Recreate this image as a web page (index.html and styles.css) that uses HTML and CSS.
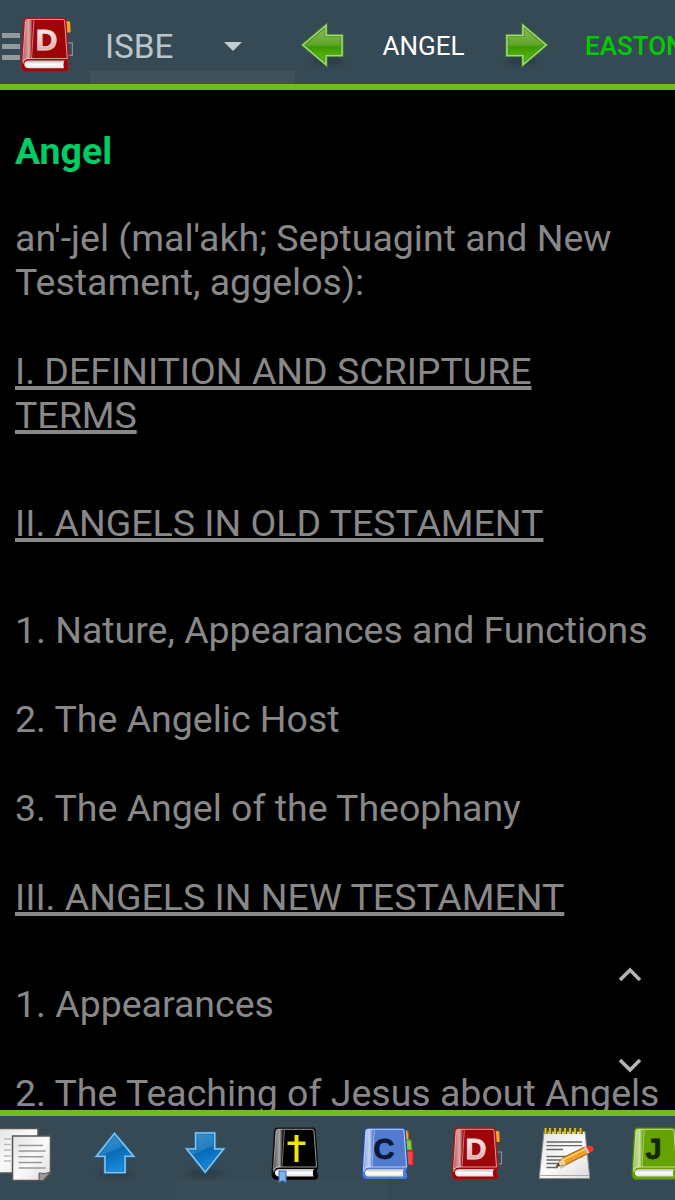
FILE: index.html
```html
<!DOCTYPE html>
<html lang="en">
<head>
    <meta charset="UTF-8">
    <title>ISBE - Angel</title>
    <link rel="stylesheet" href="styles.css">
</head>
<body>
<!-- shared gradients and the book shape -->
<svg class="defs" width="0" height="0">
    <defs>
        <linearGradient id="green" x1="0" y1="0" x2="0" y2="1">
            <stop offset="0" stop-color="#8fbd65"/>
            <stop offset=".48" stop-color="#62a52b"/>
            <stop offset=".56" stop-color="#3d9a00"/>
            <stop offset="1" stop-color="#63c914"/>
        </linearGradient>
        <linearGradient id="blue" x1="0" y1="0" x2=".4" y2="1">
            <stop offset="0" stop-color="#4291c8"/>
            <stop offset=".5" stop-color="#2380c4"/>
            <stop offset=".56" stop-color="#0869b4"/>
            <stop offset="1" stop-color="#168be0"/>
        </linearGradient>
        <linearGradient id="paper" x1="0" y1="0" x2="1" y2="1">
            <stop offset="0" stop-color="#e2e2e2"/>
            <stop offset=".5" stop-color="#fafafa"/>
            <stop offset="1" stop-color="#dcdcdc"/>
        </linearGradient>
        <linearGradient id="spine">
            <stop offset="0" stop-color="#fff" stop-opacity=".35"/>
            <stop offset=".6" stop-color="#fff" stop-opacity=".65"/>
            <stop offset="1" stop-color="#fff" stop-opacity=".1"/>
        </linearGradient>
        <linearGradient id="pages" x1="0" y1="0" x2="0" y2="1">
            <stop offset="0" stop-color="#b9b9b9"/>
            <stop offset=".5" stop-color="#fff"/>
            <stop offset="1" stop-color="#ddd"/>
        </linearGradient>
        <linearGradient id="letterD" x1="0" y1="0" x2="0" y2="1">
            <stop offset="0" stop-color="#fff"/>
            <stop offset="1" stop-color="#d99a9a"/>
        </linearGradient>
        <symbol id="book" viewBox="0 0 60 60">
            <path class="cover" d="M12 4H48Q50 4 50.200 6L53 43L51.500 47Q52 50 53 52Q53 55.500 49 55.500H11Q7 55 7 49L9.500 7Q10 4 12 4Z" stroke-width="1"/>
            <path d="M13 5.500H18L16 43Q11 43 9 46L11 7Z" fill="url(#spine)"/>
            <path d="M19.300 6L17 43" stroke="#fff" stroke-opacity=".45" fill="none"/>
            <path d="M8.500 46L11 7Q11.200 5.300 13 5.300H47Q48.800 5.300 49 7L51.500 43H14Q9 43 8.700 48" fill="none" stroke="#fff" stroke-opacity=".6"/>
            <path d="M13.500 45H49Q47 48.500 48.500 52.500H13.500Q10 52 10 48.700T13.500 45Z" fill="url(#pages)"/>
        </symbol>
        <symbol id="tabsD" viewBox="0 0 60 60">
            <rect x="49.500" y="7" width="5" height="11" rx="1" fill="#f6a51b" transform="rotate(-4 52 12)"/>
            <path d="M51 28H56.500V40H52" fill="none" stroke="#83909a" stroke-width="1.200"/>
        </symbol>
    </defs>
</svg>

<div class="app">
    <div class="topbar">
        <div class="home">
            <div class="menu"><i></i><i></i><i></i></div>
            <svg class="icon red home-book" viewBox="0 0 60 60">
                <use href="#tabsD"/>
                <use href="#book"/>
                <text x="31.500" y="34.500" fill="url(#letterD)" stroke="#f0d5d5">D</text>
            </svg>
        </div>
        <div class="spinner">
            <span>ISBE</span>
            <i class="caret"></i>
        </div>
        <svg class="arrow prev" viewBox="0 0 50 50">
            <ellipse cx="29" cy="41" rx="16" ry="5" class="shadow"/>
            <path d="M5 25L28 5.500V15.500H44V35.500H28V44.500Z" fill="url(#green)" stroke="#3f8f1b" stroke-width="3"/>
            <path d="M5 25L28 5.500V15.500H44V35.500H28V44.500Z" fill="none" stroke="#a5d57d" stroke-width="1.600"/>
        </svg>
        <span class="topic">ANGEL</span>
        <svg class="arrow next" viewBox="0 0 50 50">
            <ellipse cx="21" cy="41" rx="16" ry="5" class="shadow"/>
            <path d="M45 25L22 5.500V15.500H6V35.500H22V44.500Z" fill="url(#green)" stroke="#3f8f1b" stroke-width="3"/>
            <path d="M45 25L22 5.500V15.500H6V35.500H22V44.500Z" fill="none" stroke="#a5d57d" stroke-width="1.600"/>
        </svg>
        <span class="other">EASTON</span>
    </div>

    <div class="content">
        <h1>Angel</h1>
        <p>an'-jel (mal'akh; Septuagint and New Testament, aggelos):</p>
        <h2>I. DEFINITION AND SCRIPTURE TERMS</h2>
        <h2>II. ANGELS IN OLD TESTAMENT</h2>
        <p>1. Nature, Appearances and Functions</p>
        <p>2. The Angelic Host</p>
        <p>3. The Angel of the Theophany</p>
        <h2>III. ANGELS IN NEW TESTAMENT</h2>
        <p>1. Appearances</p>
        <p>2. The Teaching of Jesus about Angels</p>
        <div class="scroll">
            <svg width="24" height="16" viewBox="0 0 24 16"><path d="M2 13L12 3L22 13"/></svg>
            <svg width="24" height="16" viewBox="0 0 24 16"><path d="M2 3L12 13L22 3"/></svg>
        </div>
    </div>

    <div class="bottombar">
        <div class="tool">
            <svg class="icon" viewBox="0 0 60 60">
                <path d="M0 4.500H43V49H0Z" fill="url(#paper)" stroke="#555" stroke-width="1.500"/>
                <path d="M9 15H16M9 20.500H16M9 26H16M9 32H16M9 37H16" stroke="#bbb" stroke-width="1.500"/>
                <path d="M17.500 12H55.500V49L48 56.500H17.500Z" fill="url(#paper)" stroke="#555" stroke-width="1.500"/>
                <path d="M23.500 21.500H48M23.500 27H50.500M23.500 32.800H48.500M23.500 38.500H47M23.500 44H50.500" stroke="#999" stroke-width="1.600"/>
                <path d="M44 56.500V49Q50 50.500 55.500 48L48 56.500Z" fill="#999" stroke="#555"/>
            </svg>
        </div>
        <div class="tool">
            <svg class="icon" viewBox="0 0 60 60">
                <ellipse cx="30" cy="49.500" rx="18" ry="4.500" class="shadow"/>
                <path d="M29.500 9.500L48.500 32.200H40V48.500H20V32.200H11.500Z" fill="url(#blue)" stroke="#1b6aa5" stroke-width="3"/>
                <path d="M29.500 9.500L48.500 32.200H40V48.500H20V32.200H11.500Z" fill="none" stroke="#86c3ed" stroke-width="1.600"/>
            </svg>
        </div>
        <div class="tool">
            <svg class="icon" viewBox="0 0 60 60">
                <ellipse cx="30" cy="49.500" rx="18" ry="4.500" class="shadow"/>
                <path d="M20.700 9H39.700V25H48.500L30.200 48L11.800 25H20.700Z" fill="url(#blue)" stroke="#1b6aa5" stroke-width="3"/>
                <path d="M20.700 9H39.700V25H48.500L30.200 48L11.800 25H20.700Z" fill="none" stroke="#86c3ed" stroke-width="1.600"/>
            </svg>
        </div>
        <div class="tool">
            <svg class="icon black" viewBox="0 0 60 60">
                <use href="#book"/>
                <path d="M29.500 11H33.500V17.500H40.500V21H33.500V38H29.500V21H22.500V17.500H29.500Z" fill="#f1e606"/>
                <path d="M14 47H21V58.500L17.500 56.500L14 58.500Z" fill="#80b2e8" stroke="#3971b8"/>
            </svg>
        </div>
        <div class="tool">
            <svg class="icon navy" viewBox="0 0 60 60">
                <path d="M49 6L53 7L54 17H50Z" fill="#f6a13b" stroke="#a65e16"/>
                <path d="M50 16H56L57 26H51Z" fill="#8cc83b" stroke="#598c1f"/>
                <path d="M51 27H58V41H52Z" fill="#f64444" stroke="#c51b1b"/>
                <use href="#book"/>
                <text x="29" y="35" fill="#0b1836" stroke="#0b1836">C</text>
            </svg>
        </div>
        <div class="tool">
            <svg class="icon red" viewBox="0 0 60 60">
                <use href="#tabsD"/>
                <use href="#book"/>
                <text x="31" y="35" fill="url(#letterD)" stroke="#f0d5d5">D</text>
            </svg>
        </div>
        <div class="tool">
            <svg class="icon" viewBox="0 0 60 60">
                <path d="M9 7.500H50L54.500 51V54.500H4.500V51Z" fill="url(#paper)" stroke="#888"/>
                <path d="M4.500 51.500H54.500" stroke="#aaa"/>
                <path d="M11.500 18H47M11.500 21.700H47M11.500 25.500H28M11.500 32.500H48M11.500 36H34M11.500 39.500H26M11.500 43.500H23" stroke="#666" stroke-width="1.300"/>
                <path d="M11 4V10M15.500 4V10M20.500 4V10M25.500 4V10M30.500 4V10M35.500 4V10M40.500 4V10M46 4V10" stroke="#675808" stroke-width="3.500"/>
                <path d="M10.500 4V10M15 4V10M20 4V10M25 4V10M30 4V10M35 4V10M40 4V10M45.500 4V10" stroke="#dcc52d" stroke-width="1.800"/>
                <path d="M24 42L49 27" stroke="#000" stroke-opacity=".2" stroke-width="7"/>
                <path d="M21 42.500L28 33.500L50 23L54 29L31 40.500Z" fill="#ef9e26" stroke="#9c5b0b"/>
                <path d="M29 35.500L50 25.200" stroke="#ffd277" stroke-width="1.500"/>
                <path d="M21 42.500L28 33.500L31 40.500Z" fill="#f1cf98"/>
                <path d="M21 42.500L23.500 39L25 41.500Z" fill="#333"/>
                <path d="M50 23L54.500 21.500Q60 22 58 27L54 29Z" fill="#f3352d"/>
                <path d="M49 23.500L51 22.500L54.500 28.700L52.500 29.700Z" fill="#ccc"/>
            </svg>
        </div>
        <div class="tool">
            <svg class="icon lime" viewBox="0 0 60 60">
                <use href="#book"/>
                <text x="28.500" y="35" fill="#142604" stroke="#142604">J</text>
            </svg>
        </div>
    </div>
</div>
</body>
</html>
```

FILE: styles.css
```css
body{
    margin:0;
    background:#000;
    font-family:Roboto,"Liberation Sans",sans-serif;
}
.defs{
    position:absolute;
}
.app{
    display:flex;
    flex-direction:column;
    width:675px;
    height:1200px;
    overflow:hidden;
}

/* top bar */
.topbar{
    display:flex;
    align-items:center;
    flex:none;
    box-sizing:border-box;
    height:90px;
    border-bottom:6px solid #70bd23;
    background:#364a55;
    overflow:hidden;
    white-space:nowrap;
}
.home{
    display:flex;
    flex:none;
    width:90px;
    padding-top:5px;
}
.menu{
    display:flex;
    flex-direction:column;
    gap:6.300px;
    width:20px;
    padding:19px 0 0 2px;
    box-sizing:border-box;
}
.menu i{
    height:5px;
    background:#96999c;
}
.icon{
    flex:none;
    width:60px;
    height:60px;
}
.icon text{
    font-family:"Liberation Sans",sans-serif;
    font-size:29px;
    font-weight:bold;
    text-anchor:middle;
    stroke-width:.800px;
}
.home-book{
    width:62px;
    height:62px;
    margin-left:-6px;
}
.spinner{
    display:flex;
    align-items:center;
    flex:none;
    box-sizing:border-box;
    width:205px;
    height:84px;
    padding:8px 53px 0 15px;
    justify-content:space-between;
    background:linear-gradient(#364a55 71px,#40515c 71px);
    color:#bac6cc;
    font-size:33.300px;
}
.caret{
    border:9px solid transparent;
    border-top-color:#c4ccd0;
    border-bottom:0;
}
.arrow{
    flex:none;
    width:50px;
    height:50px;
    margin-top:6px;
}
.prev{
    margin-left:3px;
}
.topic{
    width:103px;
    margin:8px 0 0 34.500px;
    color:#fff;
    font-size:26px;
}
.next{
    margin-left:15.500px;
}
.topic,.other{
    flex:none;
}
.other{
    margin:8px 0 0 34px;
    color:#0c0;
    font-size:26px;
    font-weight:500;
}
.shadow{
    fill:#1c2a33;
    opacity:.35;
    filter:blur(2px);
}

/* dictionary text */
.content{
    position:relative;
    flex:1;
    min-height:0;
    overflow:hidden;
    padding:39.300px 0 0 15px;
    color:#888;
    font-size:37.470px;
    line-height:44.400px;
}
.content h1{
    margin:0 0 42px;
    color:#0c6;
    font-size:37.470px;
    font-weight:bold;
}
.content p{
    margin:0 0 44.400px;
}
.content h2{
    width:560px;
    margin:0 0 63px;
    font-size:37.470px;
    font-weight:normal;
    text-decoration:underline;
    text-decoration-thickness:3.500px;
    text-underline-offset:2px;
    text-decoration-skip-ink:none;
}
.scroll{
    position:absolute;
    top:877px;
    right:33px;
    display:flex;
    flex-direction:column;
    gap:74px;
}
.scroll svg{
    display:block;
}
.scroll path{
    fill:none;
    stroke:#b4b4b4;
    stroke-width:3.500;
}

/* bottom bar */
.bottombar{
    display:flex;
    flex:none;
    box-sizing:border-box;
    height:90px;
    padding-top:8px;
    border-top:6px solid #70bd23;
    background:linear-gradient(#394d58,#394d58) 175px 64px/212px 20px no-repeat #364a55;
}
.tool{
    flex:none;
    width:90px;
    text-align:center;
}
.tool:first-child{
    margin-left:-20px;
}

/* book colours */
.cover{
    fill:var(--cover);
    stroke:var(--edge);
}
.red{
    --cover:#9d0508;
    --edge:#b51316;
}
.black{
    --cover:#000;
    --edge:#111;
}
.navy{
    --cover:#527bd0;
    --edge:#1648ae;
}
.lime{
    --cover:#65a300;
    --edge:#4b8500;
}
```
